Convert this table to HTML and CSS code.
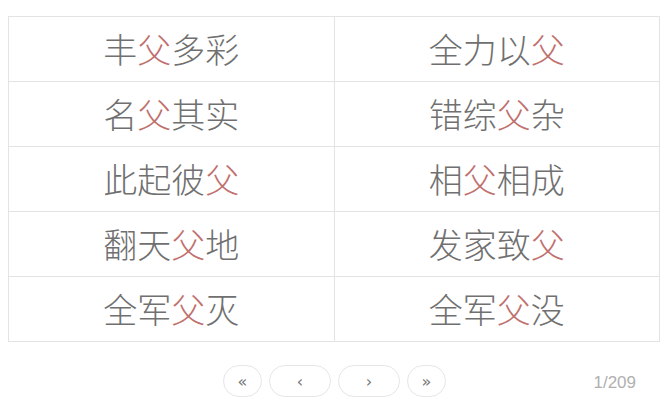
FILE: index.html
```html
<!DOCTYPE html>
<html lang="zh">
<head>
<meta charset="utf-8">
<link rel="stylesheet" href="styles.css">
</head>
<body>
<table class="grid">
  <tr><td>丰<span class="hl">父</span>多彩</td><td>全力以<span class="hl">父</span></td></tr>
  <tr><td>名<span class="hl">父</span>其实</td><td>错综<span class="hl">父</span>杂</td></tr>
  <tr><td>此起彼<span class="hl">父</span></td><td>相<span class="hl">父</span>相成</td></tr>
  <tr><td>翻天<span class="hl">父</span>地</td><td>发家致<span class="hl">父</span></td></tr>
  <tr><td>全军<span class="hl">父</span>灭</td><td>全军<span class="hl">父</span>没</td></tr>
</table>
<div class="pager">
  <div class="btns">
    <button class="btn round">«</button>
    <button class="btn pill">‹</button>
    <button class="btn pill">›</button>
    <button class="btn round">»</button>
  </div>
  <span class="count">1/209</span>
</div>
</body>
</html>
```
FILE: styles.css
```css
html, body { margin: 0; padding: 0; background: #fff; }
body { padding: 16px 12px 0 8px; font-family: "Noto Sans CJK SC", "Noto Sans", sans-serif; }
.grid { width: 652px; border-collapse: collapse; border: 1px solid #e3e3e3; table-layout: fixed; }
.grid td { border: 1px solid #e3e3e3; height: 64px; padding: 0; text-align: center; font-size: 34px; font-weight: 300; color: #707070; line-height: 1; }
.hl { color: #c0706e; }
.pager { position: relative; height: 70px; padding-top: 8px; box-sizing: border-box; display: flex; align-items: center; justify-content: center; }
.btns { display: flex; gap: 7px; margin-left: 1px; }
.btn { height: 32px; border: 1px solid #e6e6e6; background: #fff; border-radius: 16px; color: #777; font-size: 16px; font-family: "DejaVu Sans", sans-serif; padding: 0; }
.round { width: 39px; }
.pill { width: 62px; }
.count { position: absolute; right: 24px; top: 31px; font-family: "Liberation Sans", sans-serif; font-size: 17px; color: #b0b0b0; }
```
